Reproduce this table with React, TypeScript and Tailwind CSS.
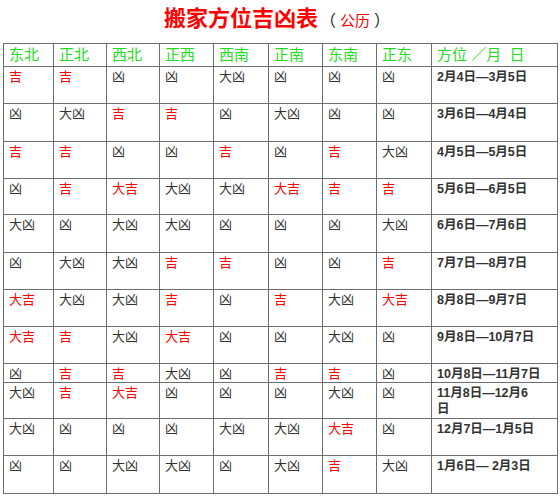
import React from "react";

const headers = ["东北", "正北", "西北", "正西", "西南", "正南", "东南", "正东"];

type Row = { cells: string[]; date: React.ReactNode; h: string };

const rows: Row[] = [
  { cells: ["吉", "吉", "凶", "凶", "大凶", "凶", "凶", "凶"], date: "2月4日—3月5日", h: "h-[36px]" },
  { cells: ["凶", "大凶", "吉", "吉", "凶", "大凶", "凶", "凶"], date: "3月6日—4月4日", h: "h-[37px]" },
  { cells: ["吉", "吉", "凶", "凶", "吉", "凶", "吉", "大凶"], date: "4月5日—5月5日", h: "h-[36px]" },
  { cells: ["凶", "吉", "大吉", "大凶", "大凶", "大吉", "吉", "吉"], date: "5月6日—6月5日", h: "h-[35px]" },
  { cells: ["大凶", "凶", "大凶", "大凶", "凶", "凶", "凶", "大凶"], date: "6月6日—7月6日", h: "h-[37px]" },
  { cells: ["凶", "大凶", "大凶", "吉", "吉", "凶", "凶", "吉"], date: "7月7日—8月7日", h: "h-[36px]" },
  { cells: ["大吉", "大凶", "大凶", "吉", "凶", "吉", "大凶", "大吉"], date: "8月8日—9月7日", h: "h-[36px]" },
  { cells: ["大吉", "吉", "大凶", "大吉", "凶", "凶", "大凶", "凶"], date: "9月8日—10月7日", h: "h-[36px]" },
  { cells: ["凶", "吉", "吉", "大凶", "凶", "吉", "吉", "凶"], date: "10月8日—11月7日", h: "h-[18px]" },
  {
    cells: ["大凶", "吉", "大吉", "凶", "凶", "凶", "大凶", "凶"],
    date: (
      <>
        11月8日—12月6
        <br />日
      </>
    ),
    h: "h-[35px]",
  },
  { cells: ["大凶", "凶", "凶", "凶", "大凶", "大凶", "大吉", "凶"], date: "12月7日—1月5日", h: "h-[36px]" },
  { cells: ["凶", "凶", "大凶", "大凶", "凶", "大凶", "吉", "大凶"], date: "1月6日— 2月3日", h: "h-[37px]" },
];

const cjk = { fontFamily: '"Liberation Sans", "Noto Sans CJK SC", sans-serif' };
const cjkFirst = { fontFamily: '"Noto Sans CJK SC", "Liberation Sans", sans-serif' };

export default function App() {
  return (
    <div className="w-[560px] h-[498px] bg-white overflow-hidden" style={cjk}>
      <div className="h-[43px] flex justify-center items-start pt-[1px]">
        <div className="flex items-baseline pr-[6px]" style={cjkFirst}>
          <span className="text-[22px] leading-[30px] font-bold text-[#ff0000]">搬家方位吉凶表</span>
          <span className="text-[16px] leading-[30px] text-[#222] ml-[2px]">（</span>
          <span className="text-[15px] leading-[30px] text-[#ff0000] px-[4px]">公历</span>
          <span className="text-[16px] leading-[30px] text-[#222]">）</span>
        </div>
      </div>
      <div className="ml-[3px] w-[555px] grid grid-cols-[49px_52px_52px_53px_54px_53px_53px_54px_125px] gap-[1px] p-[1px] bg-[#6e6e6e]">
        {headers.map((h) => (
          <div key={h} className="bg-white h-[22px] pl-[5px] flex items-center text-[15px] text-[#1edc1e]">
            {h}
          </div>
        ))}
        <div className="bg-white h-[22px] pl-[5px] flex items-center text-[15px] text-[#1edc1e] whitespace-pre">
          方位 ／月  日
        </div>
        {rows.map((r, i) => (
          <React.Fragment key={i}>
            {r.cells.map((c, j) => (
              <div
                key={j}
                className={`bg-white ${r.h} pl-[5px] pt-[2px] text-[13px] leading-[16px] ${
                  c.includes("吉") ? "text-[#ff0000]" : "text-[#333333]"
                }`}
              >
                {c}
              </div>
            ))}
            <div className={`bg-white ${r.h} pl-[5px] pt-[2px] text-[12.5px] leading-[16px] font-bold text-[#333333] whitespace-pre`}>
              {r.date}
            </div>
          </React.Fragment>
        ))}
      </div>
    </div>
  );
}
